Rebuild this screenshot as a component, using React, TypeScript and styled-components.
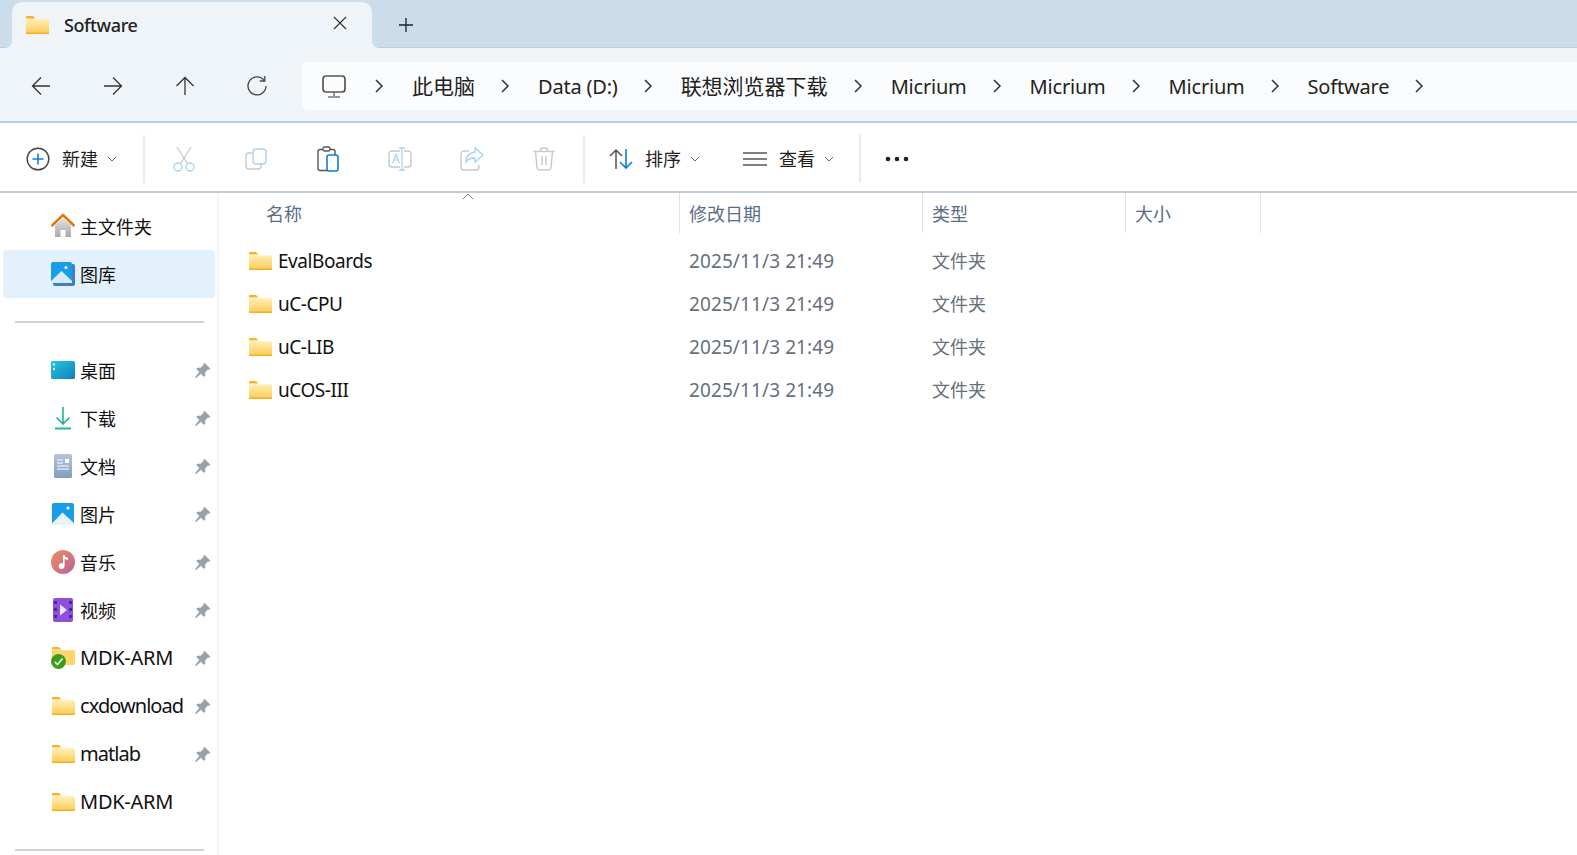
import React from 'react';
import styled, { createGlobalStyle } from 'styled-components';

const GlobalStyle = createGlobalStyle`
  html, body {
    margin: 0;
    padding: 0;
    background: #fff;
    overflow: hidden;
  }
  * { box-sizing: border-box; }
`;

const FONT = `"Noto Sans", "Noto Sans CJK SC", sans-serif`;

const Window = styled.div`
  width: 1577px;
  height: 855px;
  overflow: hidden;
  display: flex;
  flex-direction: column;
  font-family: ${FONT};
  color: #1c1c1c;
  background: #fff;
`;

/* tab strip */
const TabStrip = styled.div`
  height: 48px;
  flex: none;
  display: flex;
  padding: 2px 0 0 12px;
  background: #cbdcea;
  box-shadow: inset 0 -1px 0 #bccfdf;
`;

const Tab = styled.div`
  position: relative;
  width: 360px;
  display: flex;
  align-items: center;
  padding: 0 14px;
  background: #eff4f9;
  border-radius: 10px 10px 0 0;

  &::before,
  &::after {
    content: '';
    position: absolute;
    bottom: 0;
    width: 6px;
    height: 6px;
    background: radial-gradient(circle at var(--cx) 0, #cbdcea 5.5px, #eff4f9 6px);
  }
  &::before {
    --cx: 0;
    left: -6px;
  }
  &::after {
    --cx: 100%;
    right: -6px;
  }
`;

const TabTitle = styled.span`
  margin-left: 15px;
  font-size: 18px;
  font-weight: 500;
  letter-spacing: -0.4px;
  color: #222;
  flex: 1;
`;

const TabClose = styled.button`
  width: 24px;
  height: 24px;
  margin-right: 6px;
  margin-top: -4px;
  padding: 0;
  border: 0;
  background: none;
  display: flex;
  align-items: center;
  justify-content: center;
`;

const NewTab = styled(TabClose)`
  width: 24px;
  margin: 0 0 0 22px;
  align-self: center;
`;

/* nav row */
const NavBar = styled.div`
  height: 75px;
  flex: none;
  display: flex;
  padding: 14px 0 11px 5px;
  background: #eff4f9;
  border-bottom: 2px solid #bccddb;
`;

const NavButton = styled.button`
  width: 72px;
  height: 48px;
  padding: 0;
  border: 0;
  background: none;
  display: flex;
  align-items: center;
  justify-content: center;
`;

const AddressBar = styled.div`
  flex: 1;
  margin-left: 9px;
  height: 48px;
  padding-left: 20px;
  display: flex;
  align-items: center;
  background: #fbfcfe;
  border-radius: 6px 0 0 6px;
`;

const Crumb = styled.span`
  font-size: 20px;
  letter-spacing: -0.2px;
  white-space: nowrap;
  color: #222;
`;

const CrumbCjk = styled(Crumb)`
  font-size: 21px;
  letter-spacing: 0;
  padding-bottom: 2px;
`;

const CrumbSep = styled.span`
  width: 10px;
  height: 16px;
  margin: 0 28px 0 25px;
  display: flex;
  flex: none;
`;

const ComputerSep = styled(CrumbSep)`
  margin: 0 28px 0 28px;
`;

/* command bar */
const CommandBar = styled.div`
  height: 70px;
  flex: none;
  display: flex;
  align-items: center;
  padding: 3px 0 0 26px;
  background: #fff;
  border-bottom: 2px solid #bccddb;
`;

const CommandDivider = styled.div<{ $before?: number; $after?: number }>`
  width: 2px;
  height: 48px;
  flex: none;
  margin: 0 ${p => p.$after ?? 0}px 0 ${p => p.$before ?? 0}px;
  background: #ebebeb;
`;

const MenuButton = styled.div<{ $width: number; $pad?: number }>`
  width: ${p => p.$width}px;
  padding-left: ${p => p.$pad ?? 0}px;
  flex: none;
  display: flex;
  align-items: center;
`;

const MenuLabel = styled.span<{ $gap: number }>`
  margin-left: ${p => p.$gap}px;
  padding-bottom: 1px;
  font-size: 18px;
  color: #1f1f1f;
`;

const Caret = styled.span`
  margin-left: 9px;
  display: flex;
`;

const IconButton = styled.div`
  width: 72px;
  height: 48px;
  flex: none;
  display: flex;
  align-items: center;
  justify-content: center;
`;

/* body */
const Main = styled.div`
  flex: 1;
  min-height: 0;
  display: flex;
`;

const Sidebar = styled.nav`
  width: 219px;
  flex: none;
  padding: 9px 3px 0;
  border-right: 2px solid #f5f6f7;
`;

const SideRow = styled.div<{ $active?: boolean }>`
  height: 48px;
  width: 212px;
  display: flex;
  align-items: center;
  padding: 0 4px 0 48px;
  border-radius: 3px;
  background: ${p => (p.$active ? '#e3f1fd' : 'transparent')};
`;

const SideIcon = styled.span`
  width: 24px;
  height: 24px;
  flex: none;
  display: flex;
  align-items: center;
  justify-content: center;
`;

const SideLabel = styled.span<{ $track?: number }>`
  flex: 1;
  margin-left: 5px;
  padding-bottom: 1px;
  font-size: 20px;
  letter-spacing: ${p => p.$track ?? -0.65}px;
  white-space: nowrap;
  color: #111;
`;

const SideLabelCjk = styled(SideLabel)`
  font-size: 18px;
  letter-spacing: 0;
  padding-bottom: 1px;
`;

const SideRule = styled.div<{ $after: number }>`
  height: 2px;
  width: 189px;
  margin: 23px 0 ${p => p.$after}px 12px;
  background: #d2d2d2;
`;

const FilePane = styled.section`
  flex: 1;
  min-width: 0;
`;

const HeaderRow = styled.div`
  position: relative;
  height: 40px;
  display: flex;
`;

const HeaderCell = styled.div<{ $width: number; $first?: boolean }>`
  width: ${p => p.$width}px;
  flex: none;
  padding: 0 0 1px ${p => (p.$first ? 47 : 9)}px;
  display: flex;
  align-items: center;
  font-size: 18px;
  color: #5a6d85;
  border-right: 1px solid #e2e2e2;
`;

const SortMark = styled.span`
  position: absolute;
  left: 243px;
  top: 0;
  display: flex;
`;

const FileList = styled.div`
  padding-top: 6px;
`;

const FileRow = styled.div`
  height: 43px;
  display: flex;
  align-items: center;
`;

const NameCell = styled.div`
  width: 460px;
  flex: none;
  padding-left: 30px;
  display: flex;
  align-items: center;
`;

const FileName = styled.span`
  margin-left: 6px;
  font-size: 19px;
  letter-spacing: -0.45px;
  color: #111;
`;

const DateCell = styled.div`
  width: 243px;
  flex: none;
  padding-left: 10px;
  font-size: 19px;
  letter-spacing: 0.1px;
  color: #66707a;
`;

const TypeCell = styled.div`
  font-size: 18px;
  padding: 0 0 2px 10px;
  color: #66707a;
`;

/* drawings */
const Glyph: React.FC<{ w: number; h: number; children: React.ReactNode }> = ({ w, h, children }) => (
  <svg width={w} height={h} viewBox={`0 0 ${w} ${h}`} fill="none">
    {children}
  </svg>
);

const Folder: React.FC<{ id: string }> = ({ id }) => (
  <svg width="23" height="18" viewBox="0 0 23 18">
    <defs>
      <linearGradient id={id} x1="0" y1="0" x2="0" y2="1">
        <stop offset="0" stopColor="#ffeeb4" />
        <stop offset="1" stopColor="#fdcb56" />
      </linearGradient>
    </defs>
    <path d="M0 1.2C0 .5.5 0 1.2 0h5.2c.5 0 .8.2 1.1.5L9.3 2.4H0z" fill="#f7b41f" />
    <path d="M0 3.2h21.8c.7 0 1.2.5 1.2 1.2v12.4c0 .7-.5 1.2-1.2 1.2H1.2C.5 18 0 17.5 0 16.8z" fill={`url(#${id})`} />
    <path d="M0 16.6h23v.4c0 .6-.4 1-1 1H1c-.6 0-1-.4-1-1z" fill="#f5ae1d" />
  </svg>
);

const Chevron = () => (
  <Glyph w={10} h={16}>
    <path d="M2 2l6 6-6 6" stroke="#333" strokeWidth="1.5" />
  </Glyph>
);

const CaretDown = () => (
  <Glyph w={10} h={6}>
    <path d="M1 1l4 4 4-4" stroke="#666" strokeWidth="1" />
  </Glyph>
);

const Pin = () => (
  <svg width="17" height="17" viewBox="0 0 16 16">
    <path d="M9.8.6l5.6 5.6-1.2 1.1-1-.3-2.7 2.8.1 3-1.2 1.2-3-3L2 15l-1-1 4.1-4.5-3-3 1.2-1.2 3 .1L9 2.7l-.3-1z" fill="#98a2ab" />
  </svg>
);

const HomeIcon = () => (
  <svg width="24" height="24" viewBox="0 0 24 24">
    <defs>
      <linearGradient id="homeBody" x1="0" y1="0" x2="0" y2="1">
        <stop offset="0" stopColor="#e2e2e2" />
        <stop offset="1" stopColor="#a9a9a9" />
      </linearGradient>
    </defs>
    <path d="M4 11L12 4l8 7v12h-5.5v-7h-5v7H4z" fill="url(#homeBody)" />
    <path d="M.5 12L12 1l11.5 11" stroke="#e8730c" strokeWidth="2.6" fill="none" />
  </svg>
);

const GalleryIcon = () => (
  <svg width="24" height="24" viewBox="0 0 24 24">
    <rect x="2" y="2" width="22" height="22" rx="2" fill="#3f7fc6" />
    <rect x="0" y="0" width="21" height="21" rx="2" fill="#1b9ce6" />
    <path d="M0 19L10.5 9 21 19v2H0z" fill="#d6ecfc" />
    <circle cx="15" cy="5.5" r="1.5" fill="#fff" />
  </svg>
);

const DesktopIcon = () => (
  <svg width="24" height="18" viewBox="0 0 24 18">
    <defs>
      <linearGradient id="deskFill" x1="0" y1="0" x2="1" y2="1">
        <stop offset="0" stopColor="#29c5d8" />
        <stop offset="1" stopColor="#0f7fc2" />
      </linearGradient>
    </defs>
    <rect width="24" height="18" rx="1.5" fill="url(#deskFill)" />
    <rect x="2" y="2.5" width="2" height="2" fill="#d8f4fa" />
    <rect x="2" y="7" width="2" height="2" fill="#d8f4fa" />
  </svg>
);

const DownloadIcon = () => (
  <svg width="16" height="24" viewBox="0 0 16 24" fill="none">
    <path d="M8 1v17M1.5 11.5L8 18l6.5-6.5" stroke="#20b692" strokeWidth="1.6" />
    <path d="M0 22.5h16" stroke="#20b692" strokeWidth="2" />
  </svg>
);

const DocIcon = () => (
  <svg width="19" height="24" viewBox="0 0 19 24">
    <defs>
      <linearGradient id="docFill" x1="0" y1="0" x2="0" y2="1">
        <stop offset="0" stopColor="#b4c6da" />
        <stop offset="1" stopColor="#7f9ebc" />
      </linearGradient>
    </defs>
    <rect width="18" height="24" rx="1.5" fill="url(#docFill)" />
    <path d="M3 6h6M3 9h6M3 12h12M3 15h12" stroke="#fff" strokeWidth="1.2" />
    <rect x="11" y="5" width="4" height="4" fill="#fff" />
  </svg>
);

const PictureIcon = () => (
  <svg width="22" height="22" viewBox="0 0 22 22">
    <rect width="22" height="22" rx="2" fill="#1b9ce6" />
    <path d="M0 20.5L10.5 9.5 22 20v.5c0 .8-.7 1.5-1.5 1.5h-19C.7 22 0 21.3 0 20.5z" fill="#e8f4fd" />
    <circle cx="16" cy="5" r="1.6" fill="#fff" />
  </svg>
);

const MusicIcon = () => (
  <svg width="24" height="24" viewBox="0 0 24 24">
    <defs>
      <linearGradient id="musicFill" x1="0" y1="0" x2="1" y2="1">
        <stop offset="0" stopColor="#ee8f5e" />
        <stop offset="1" stopColor="#b9609e" />
      </linearGradient>
    </defs>
    <circle cx="12" cy="12" r="12" fill="url(#musicFill)" />
    <path d="M12 5h1.6c.3 2 1.6 2.5 3.4 3v2c-1.5-.2-2.6-.6-3.4-1.3V16a3 3 0 1 1-1.6-2.6z" fill="#fff" />
  </svg>
);

const VideoIcon = () => (
  <svg width="20" height="24" viewBox="0 0 20 24">
    <rect width="20" height="24" rx="2" fill="#8e4fe0" />
    <g fill="#4a2a8a">
      <rect x="1" y="3" width="3" height="3" />
      <rect x="1" y="10" width="3" height="3" />
      <rect x="1" y="17" width="3" height="3" />
      <rect x="16" y="3" width="3" height="3" />
      <rect x="16" y="10" width="3" height="3" />
      <rect x="16" y="17" width="3" height="3" />
    </g>
    <path d="M7 6.5l7 5.5-7 5.5z" fill="#efe4fb" />
  </svg>
);

const SyncFolder = () => (
  <svg width="24" height="22" viewBox="0 0 24 22">
    <path d="M1 1.2C1 .5 1.5 0 2.2 0h5.2c.5 0 .8.2 1.1.5l1.8 1.9H1z" fill="#f7b41f" />
    <path d="M1 3.2h21.8c.7 0 1.2.5 1.2 1.2v12.4c0 .7-.5 1.2-1.2 1.2H2.2C1.5 18 1 17.5 1 16.8z" fill="#fdd56f" />
    <circle cx="7.5" cy="14.5" r="7.5" fill="#3d9c1e" />
    <path d="M3.8 14.8l2.7 2.7 5-6" stroke="#e9f8df" strokeWidth="1.7" fill="none" />
  </svg>
);

const sideItems = [
  { label: '桌面', icon: <DesktopIcon />, pinned: true },
  { label: '下载', icon: <DownloadIcon />, pinned: true },
  { label: '文档', icon: <DocIcon />, pinned: true },
  { label: '图片', icon: <PictureIcon />, pinned: true },
  { label: '音乐', icon: <MusicIcon />, pinned: true },
  { label: '视频', icon: <VideoIcon />, pinned: true },
  { label: 'MDK-ARM', icon: <SyncFolder />, pinned: true, track: -0.25 },
  { label: 'cxdownload', icon: <Folder id="sf1" />, pinned: true, track: -0.95 },
  { label: 'matlab', icon: <Folder id="sf2" />, pinned: true, track: -0.95 },
  { label: 'MDK-ARM', icon: <Folder id="sf3" />, track: -0.25 },
];

const crumbs = ['Data (D:)', '联想浏览器下载', 'Micrium', 'Micrium', 'Micrium', 'Software'];
const files = ['EvalBoards', 'uC-CPU', 'uC-LIB', 'uCOS-III'];
const DISABLED = '#c9c9c9';
const DISABLED_BLUE = '#a9d2f2';

const App: React.FC = () => {
  return (
    <Window>
      <GlobalStyle />
      <TabStrip>
        <Tab>
          <Folder id="tabFolder" />
          <TabTitle>Software</TabTitle>
          <TabClose>
            <Glyph w={14} h={14}>
              <path d="M1 1l12 12M13 1L1 13" stroke="#333" strokeWidth="1.2" />
            </Glyph>
          </TabClose>
        </Tab>
        <NewTab>
          <Glyph w={16} h={16}>
            <path d="M8 1v14M1 8h14" stroke="#222" strokeWidth="1.3" />
          </Glyph>
        </NewTab>
      </TabStrip>

      <NavBar>
        <NavButton>
          <Glyph w={20} h={20}>
            <path d="M19 10H1.500M10 1.500L1.500 10l8.500 8.500" stroke="#333" strokeWidth="1.3" />
          </Glyph>
        </NavButton>
        <NavButton>
          <Glyph w={20} h={20}>
            <path d="M1 10h17.500M10 1.500l8.500 8.500-8.500 8.500" stroke="#333" strokeWidth="1.3" />
          </Glyph>
        </NavButton>
        <NavButton>
          <Glyph w={20} h={20}>
            <path d="M10 19V1.500M1.500 10L10 1.500l8.500 8.500" stroke="#333" strokeWidth="1.3" />
          </Glyph>
        </NavButton>
        <NavButton>
          <Glyph w={20} h={20}>
            <path d="M17.200 4.500A9 9 0 1 0 19 10" stroke="#444" strokeWidth="1.3" />
            <path d="M17.800 0v5h-5" stroke="#444" strokeWidth="1.3" />
          </Glyph>
        </NavButton>
        <AddressBar>
          <Glyph w={24} h={23}>
            <rect x="1" y="1" width="22" height="16" rx="3" stroke="#555" strokeWidth="1.7" />
            <path d="M12 17v4M6 22h12" stroke="#777" strokeWidth="1.5" />
          </Glyph>
          <ComputerSep>
            <Chevron />
          </ComputerSep>
          <CrumbCjk>此电脑</CrumbCjk>
          <CrumbSep>
            <Chevron />
          </CrumbSep>
          {crumbs.map((c, i) => (
            <React.Fragment key={i}>
              {i === 1 ? <CrumbCjk>{c}</CrumbCjk> : <Crumb>{c}</Crumb>}
              <CrumbSep>
                <Chevron />
              </CrumbSep>
            </React.Fragment>
          ))}
        </AddressBar>
      </NavBar>

      <CommandBar>
        <MenuButton $width={117}>
          <Glyph w={24} h={24}>
            <circle cx="12" cy="12" r="10.8" stroke="#444" strokeWidth="1.4" />
            <path d="M12 6.500v11M6.500 12h11" stroke="#0f7fd6" strokeWidth="1.6" />
          </Glyph>
          <MenuLabel $gap={12}>新建</MenuLabel>
          <Caret>
            <CaretDown />
          </Caret>
        </MenuButton>
        <CommandDivider $after={3} />
        <IconButton>
          <Glyph w={22} h={26}>
            <path d="M4 1l10 16M18 1L8 17" stroke={DISABLED} strokeWidth="1.3" />
            <circle cx="5" cy="21" r="4" stroke={DISABLED_BLUE} strokeWidth="1.4" />
            <circle cx="17" cy="21" r="4" stroke={DISABLED_BLUE} strokeWidth="1.4" />
          </Glyph>
        </IconButton>
        <IconButton>
          <Glyph w={22} h={22}>
            <rect x="1" y="5" width="15" height="16" rx="3" stroke={DISABLED} strokeWidth="1.4" />
            <rect x="8" y="1" width="13" height="15" rx="3" fill="#fff" stroke={DISABLED_BLUE} strokeWidth="1.4" />
          </Glyph>
        </IconButton>
        <IconButton>
          <Glyph w={22} h={26}>
            <rect x="1" y="3.5" width="17" height="21" rx="2" stroke="#555" strokeWidth="1.4" />
            <rect x="6" y="1" width="7" height="4" rx="1.5" fill="#fff" stroke="#555" strokeWidth="1.3" />
            <rect x="10" y="9" width="11" height="16" rx="2" fill="#fff" stroke="#0f7fd6" strokeWidth="1.6" />
          </Glyph>
        </IconButton>
        <IconButton>
          <Glyph w={24} h={24}>
            <rect x="1" y="4" width="22" height="16" rx="3" stroke={DISABLED} strokeWidth="1.4" />
            <rect x="12" y="0" width="4" height="24" fill="#fff" />
            <path d="M14 1v22M11 1h6M11 23h6" stroke={DISABLED_BLUE} strokeWidth="1.3" />
            <path d="M4.500 16L8 7.500l3.500 8.500M5.800 13h4.500" stroke={DISABLED_BLUE} strokeWidth="1.2" />
          </Glyph>
        </IconButton>
        <IconButton>
          <Glyph w={24} h={24}>
            <path d="M9 4H4a3 3 0 0 0-3 3v13a3 3 0 0 0 3 3h12a3 3 0 0 0 3-3v-2" stroke={DISABLED} strokeWidth="1.4" />
            <path d="M15 1l8 7-8 7v-4c-4 0-7 1-9 4 0-5 3-9 9-10z" fill="#fff" stroke={DISABLED_BLUE} strokeWidth="1.4" />
          </Glyph>
        </IconButton>
        <IconButton>
          <Glyph w={22} h={24}>
            <path d="M0 4.500h22M7.500 4.500V3a2 2 0 0 1 2-2h3a2 2 0 0 1 2 2v1.500" stroke={DISABLED} strokeWidth="1.4" />
            <path d="M2.500 4.500l1.500 16a3 3 0 0 0 3 2.500h8a3 3 0 0 0 3-2.500l1.500-16" stroke={DISABLED} strokeWidth="1.4" />
            <path d="M9 9v9M13 9v9" stroke={DISABLED} strokeWidth="1.4" />
          </Glyph>
        </IconButton>
        <CommandDivider $before={3} />
        <MenuButton $width={133} $pad={24}>
          <Glyph w={25} h={22}>
            <path d="M7 21V2M1 8l6-6 6 6" stroke="#555" strokeWidth="1.5" />
            <path d="M17 1v19M11 14l6 6 6-6" stroke="#0f7fd6" strokeWidth="1.6" />
          </Glyph>
          <MenuLabel $gap={11}>排序</MenuLabel>
          <Caret>
            <CaretDown />
          </Caret>
        </MenuButton>
        <MenuButton $width={141} $pad={25}>
          <Glyph w={24} h={16}>
            <path d="M0 2h24M0 8h24M0 14h24" stroke="#555" strokeWidth="1.4" />
          </Glyph>
          <MenuLabel $gap={12}>查看</MenuLabel>
          <Caret>
            <CaretDown />
          </Caret>
        </MenuButton>
        <CommandDivider />
        <IconButton>
          <Glyph w={24} h={6}>
            <circle cx="3" cy="3" r="2.3" fill="#222" />
            <circle cx="12" cy="3" r="2.3" fill="#222" />
            <circle cx="21" cy="3" r="2.3" fill="#222" />
          </Glyph>
        </IconButton>
      </CommandBar>

      <Main>
        <Sidebar>
          <SideRow>
            <SideIcon>
              <HomeIcon />
            </SideIcon>
            <SideLabelCjk>主文件夹</SideLabelCjk>
          </SideRow>
          <SideRow $active>
            <SideIcon>
              <GalleryIcon />
            </SideIcon>
            <SideLabelCjk>图库</SideLabelCjk>
          </SideRow>
          <SideRule $after={23} />
          {sideItems.map((item, i) => (
            <SideRow key={i}>
              <SideIcon>{item.icon}</SideIcon>
              {item.track !== undefined ? (
                <SideLabel $track={item.track}>{item.label}</SideLabel>
              ) : (
                <SideLabelCjk>{item.label}</SideLabelCjk>
              )}
              {item.pinned && <Pin />}
            </SideRow>
          ))}
          <SideRule $after={0} />
        </Sidebar>

        <FilePane>
          <HeaderRow>
            <SortMark>
              <Glyph w={12} h={7}>
                <path d="M1 6l5-5 5 5" stroke="#777" strokeWidth="1" />
              </Glyph>
            </SortMark>
            <HeaderCell $first $width={461}>名称</HeaderCell>
            <HeaderCell $width={243}>修改日期</HeaderCell>
            <HeaderCell $width={203}>类型</HeaderCell>
            <HeaderCell $width={135}>大小</HeaderCell>
          </HeaderRow>
          <FileList>
            {files.map(name => (
              <FileRow key={name}>
                <NameCell>
                  <Folder id={`file-${name}`} />
                  <FileName>{name}</FileName>
                </NameCell>
                <DateCell>2025/11/3 21:49</DateCell>
                <TypeCell>文件夹</TypeCell>
              </FileRow>
            ))}
          </FileList>
        </FilePane>
      </Main>
    </Window>
  );
};

export default App;
